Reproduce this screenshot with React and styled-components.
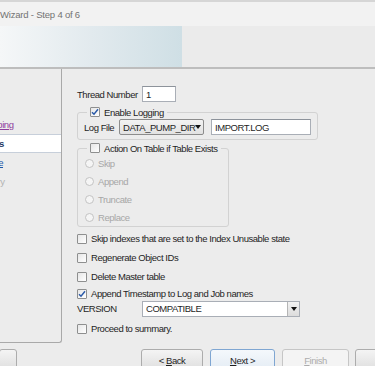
import React from 'react'
import styled, { createGlobalStyle } from 'styled-components'

const GlobalStyle = createGlobalStyle`
	html, body {
		margin: 0;
		padding: 0;
	}

	body {
		background: #ececec;
		font-family: 'Liberation Sans', Arial, sans-serif;
		font-size: 9.5px;
		letter-spacing: -0.45px;
		color: #1f1f1f;
	}
`

const Window = styled.div`
	width: 375px;
	height: 366px;
	overflow: hidden;
	display: flex;
	flex-direction: column;
	background: #ececec;
`

const TitleBar = styled.div`
	height: 24px;
	flex-shrink: 0;
	border-top: 2px solid #d6d6d6;
	background: #f2f2f2;
	display: flex;
	align-items: center;
	font-size: 9.5px;
	letter-spacing: -0.2px;
	color: #727272;
	white-space: nowrap;
`

const Banner = styled.div`
	height: 41px;
	flex-shrink: 0;
	border-bottom: 2px solid #bdbdbd;
	background: #ebebeb;
	display: flex;
`

const BannerArt = styled.div`
	width: 182px;
	background: linear-gradient(90deg, #f5f7f8 0%, #e2eaee 50%, #cfdfe5 100%);
`

const Body = styled.div`
	display: flex;
	height: 274px;
	flex-shrink: 0;
`

const Nav = styled.nav`
	width: 62px;
	flex-shrink: 0;
	box-sizing: border-box;
	padding-top: 46px;
	border-right: 1px solid #a9a9a9;
	border-bottom: 1px solid #a9a9a9;
	border-bottom-right-radius: 3px;
	overflow: hidden;
`

const NavItem = styled.div`
	height: 19px;
	box-sizing: border-box;
	display: flex;
	align-items: center;
	white-space: nowrap;
	background: ${(p) => (p.$active ? '#ffffff' : 'transparent')};
	border-top: 1px solid ${(p) => (p.$active ? '#c7cfda' : 'transparent')};
	border-bottom: 1px solid ${(p) => (p.$active ? '#c7cfda' : 'transparent')};
`

const NavText = styled.span`
	margin-left: ${(p) => p.$offset}px;
	color: ${(p) => p.$color};
	text-decoration: ${(p) => (p.$link ? 'underline' : 'none')};
	font-weight: ${(p) => (p.$active ? 'bold' : 'normal')};
`

const Main = styled.main`
	flex: 1;
	display: flex;
	flex-direction: column;
	align-items: flex-start;
	padding: 17px 0 0 15px;
`

const Row = styled.div`
	display: flex;
	align-items: center;
	height: ${(p) => p.$h || 19}px;
	white-space: nowrap;
`

const Label = styled.span`
	width: ${(p) => p.$w}px;
	flex-shrink: 0;
	color: ${(p) => (p.$disabled ? '#a7a7a7' : '#1f1f1f')};
`

const TextBox = styled.div`
	width: ${(p) => p.$w}px;
	height: 16px;
	box-sizing: border-box;
	border: 1px solid #a9aeb6;
	border-top-color: #8d939b;
	background: #fff;
	padding: 0 3px;
	margin-left: ${(p) => p.$ml || 0}px;
	display: flex;
	align-items: center;
`

const Combo = styled.div`
	width: ${(p) => p.$w}px;
	height: 16px;
	box-sizing: border-box;
	border: 1px solid #8c8c8c;
	border-radius: 2px;
	background: linear-gradient(#f3f3f3, #e2e2e2);
	padding: 0 5px 0 3px;
	display: flex;
	align-items: center;
	justify-content: space-between;
`

const Arrow = styled.span`
	width: 0;
	height: 0;
	border-left: 3px solid transparent;
	border-right: 3px solid transparent;
	border-top: 4px solid #111;
`

const WhiteCombo = styled.div`
	width: ${(p) => p.$w}px;
	height: 16px;
	box-sizing: border-box;
	border: 1px solid #a9aeb6;
	background: #fff;
	display: flex;
	align-items: stretch;
`

const ComboValue = styled.span`
	flex: 1;
	padding-left: 3px;
	display: flex;
	align-items: center;
`

const DropButton = styled.span`
	width: 11px;
	border-left: 1px solid #b5b5b5;
	background: linear-gradient(#f2f2f2, #dcdcdc);
	display: flex;
	align-items: center;
	justify-content: center;
`

const Group = styled.fieldset`
	width: ${(p) => p.$w}px;
	box-sizing: border-box;
	margin: ${(p) => p.$mt}px 0 0 0;
	padding: 0 6px ${(p) => p.$pb}px 6px;
	border: 1px solid #d2d2d2;
	border-radius: 3px;
	min-width: 0;
`

const Legend = styled.legend`
	height: 12px;
	margin-left: 3px;
	padding: 0 3px;
	display: flex;
	align-items: center;
	gap: 4px;
	white-space: nowrap;
`

const Box = styled.span`
	width: 10px;
	height: 10px;
	box-sizing: border-box;
	flex-shrink: 0;
	border: 1px solid #8e8f8f;
	border-radius: 1px;
	background: linear-gradient(135deg, #e6e6e6, #ffffff);
	display: flex;
	align-items: center;
	justify-content: center;
	margin-right: ${(p) => p.$mr ?? 4}px;
`

const Radio = styled.span`
	width: 9px;
	height: 9px;
	box-sizing: border-box;
	border: 1px solid #c3c3c3;
	border-radius: 50%;
	background: #f5f5f5;
	margin-right: 4px;
	flex-shrink: 0;
`

const RadioList = styled.div`
	display: flex;
	flex-direction: column;
	padding-left: 1px;
`

const ButtonBar = styled.div`
	display: flex;
	align-items: flex-start;
	padding-top: 6px;
	gap: 7px;
`

const Button = styled.div`
	width: ${(p) => p.$w}px;
	height: 22px;
	flex-shrink: 0;
	box-sizing: border-box;
	border: 1px solid ${(p) => (p.$focus ? '#7fa6d2' : p.$disabled ? '#c6c6c6' : '#acacac')};
	border-radius: 3px;
	background: ${(p) =>
		p.$disabled
			? '#f4f4f4'
			: p.$focus
			? 'linear-gradient(#f4f8fc, #e4ecf4)'
			: 'linear-gradient(#f4f4f4, #dedede)'};
	color: ${(p) => (p.$disabled ? '#acacac' : '#1f1f1f')};
	display: flex;
	align-items: center;
	justify-content: center;
	margin-left: ${(p) => p.$ml || 0}px;

	u {
		text-decoration: underline;
	}
`

const Check = ({ checked, mr }) => (
	<Box $mr={mr}>
		{checked && (
			<svg width='8' height='8' viewBox='0 0 8 8'>
				<path d='M1 4.2 L3 6.2 L7 1.2' fill='none' stroke='#2a5aa8' strokeWidth='1.5' />
			</svg>
		)}
	</Box>
)

// the step list is scrolled: only the tail of each label shows
const navItems = [
	{ label: 'Remapping', color: '#8e3c9e', link: true, offset: -31 },
	{ label: 'Options', color: '#1e3a64', active: true, offset: -29 },
	{ label: 'Schedule', color: '#1b57a8', link: true, offset: -33 },
	{ label: 'Summary', color: '#b3b3b3', offset: -33 },
]

const checks = [
	'Skip indexes that are set to the Index Unusable state',
	'Regenerate Object IDs',
	'Delete Master table',
]

const App = () => (
	<Window>
		<GlobalStyle />
		<TitleBar>Wizard - Step 4 of 6</TitleBar>
		<Banner>
			<BannerArt />
		</Banner>
		<Body>
			<Nav>
				{navItems.map((item) => (
					<NavItem key={item.label} $active={item.active}>
						<NavText
							$color={item.color}
							$link={item.link}
							$active={item.active}
							$offset={item.offset}
						>
							{item.label}
						</NavText>
					</NavItem>
				))}
			</Nav>
			<Main>
				<Row $h={16}>
					<Label $w={65}>Thread Number</Label>
					<TextBox $w={34}>1</TextBox>
				</Row>
				<Group $w={241} $mt={4} $pb={3}>
					<Legend>
						<Check checked mr={0} />
						Enable Logging
					</Legend>
					<Row $h={18}>
						<Label $w={35}>Log File</Label>
						<Combo $w={85}>
							DATA_PUMP_DIR
							<Arrow />
						</Combo>
						<TextBox $w={100} $ml={7}>
							IMPORT.LOG
						</TextBox>
					</Row>
				</Group>
				<Group $w={152} $mt={2} $pb={0}>
					<Legend>
						<Check mr={0} />
						Action On Table if Table Exists
					</Legend>
					<RadioList>
						{['Skip', 'Append', 'Truncate', 'Replace'].map((r) => (
							<Row key={r} $h={18}>
								<Radio />
								<Label $disabled>{r}</Label>
							</Row>
						))}
					</RadioList>
				</Group>
				<Row $h={2} />
				{checks.map((c) => (
					<Row key={c}>
						<Check />
						{c}
					</Row>
				))}
				<Row $h={15}>
					<Check checked />
					Append Timestamp to Log and Job names
				</Row>
				<Row $h={15}>
					<Label $w={65}>VERSION</Label>
					<WhiteCombo $w={158}>
						<ComboValue>COMPATIBLE</ComboValue>
						<DropButton>
							<Arrow />
						</DropButton>
					</WhiteCombo>
				</Row>
				<Row $h={25}>
					<Check />
					Proceed to summary.
				</Row>
			</Main>
		</Body>
		<ButtonBar>
			<Button $w={18} $ml={-1} />
			<Button $w={62} $ml={117}>
				&lt;&nbsp;<u>B</u>ack
			</Button>
			<Button $w={65} $focus>
				<u>N</u>ext &gt;
			</Button>
			<Button $w={67} $disabled>
				<u>F</u>inish
			</Button>
			<Button $w={67} $ml={-1} />
		</ButtonBar>
	</Window>
)

export default App
